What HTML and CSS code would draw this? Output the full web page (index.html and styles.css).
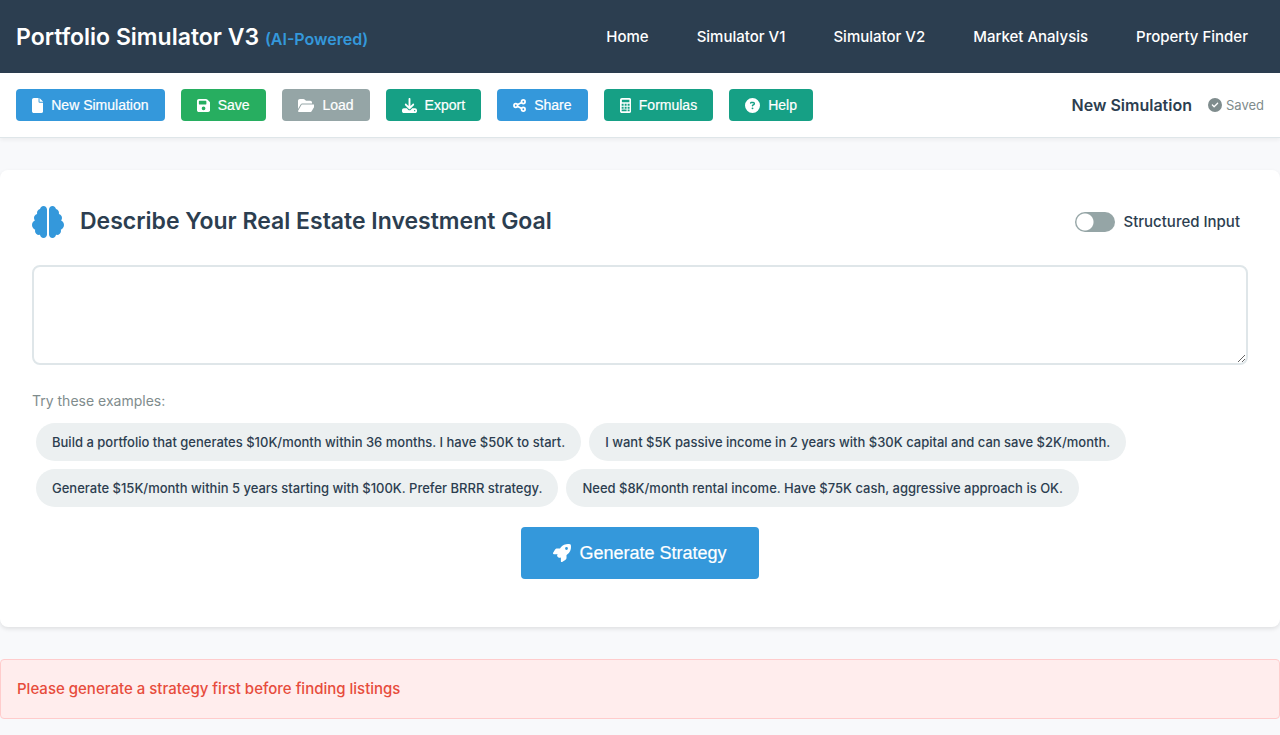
FILE: index.html
```html
<!DOCTYPE html>
<html lang="en">
<head>
<meta charset="utf-8">
<meta name="viewport" content="width=device-width, initial-scale=1">
<title>Portfolio Simulator V3</title>
<link rel="stylesheet" href="styles.css">
</head>
<body>
<header class="header">
  <h1 class="brand">Portfolio Simulator V3 <span class="brand-tag">(AI-Powered)</span></h1>
  <nav class="nav">
    <a href="#">Home</a>
    <a href="#">Simulator V1</a>
    <a href="#">Simulator V2</a>
    <a href="#">Market Analysis</a>
    <a href="#">Property Finder</a>
  </nav>
</header>

<div class="toolbar">
  <div class="actions">
    <button type="button" class="btn btn-blue"><svg class="icon" viewBox="0 0 384 512" aria-hidden="true"><path d="M0 64C0 28.7 28.7 0 64 0H224V128c0 17.7 14.3 32 32 32H384V448c0 35.3-28.7 64-64 64H64c-35.3 0-64-28.7-64-64V64zm384 64H256V0L384 128z"/></svg>New Simulation</button>
    <button type="button" class="btn btn-green"><svg class="icon" viewBox="0 0 448 512" aria-hidden="true"><path fill-rule="evenodd" d="M64 32C28.7 32 0 60.7 0 96V416c0 35.3 28.7 64 64 64H384c35.3 0 64-28.7 64-64V173.3c0-17-6.7-33.3-18.7-45.3L352 50.7C340 38.7 323.7 32 306.7 32H64zm0 96c0-17.7 14.3-32 32-32H288c17.7 0 32 14.3 32 32v64c0 17.7-14.3 32-32 32H96c-17.7 0-32-14.3-32-32V128zM224 288a64 64 0 1 1 0 128 64 64 0 1 1 0-128z"/></svg>Save</button>
    <button type="button" class="btn btn-gray"><svg class="icon" viewBox="0 0 576 512" aria-hidden="true"><path d="M88.7 223.8L0 375.8V96C0 60.7 28.7 32 64 32H181.5c17 0 33.3 6.7 45.3 18.7l26.5 26.5c12 12 28.3 18.7 45.3 18.7H416c35.3 0 64 28.7 64 64v32H144c-22.8 0-43.8 12.1-55.3 31.8zm27.6 16.1C122.1 230 132.6 224 144 224H544c11.5 0 22 6.1 27.7 16.1s5.7 22.2-.1 32.1l-112 192C453.9 474 443.4 480 432 480H32c-11.5 0-22-6.1-27.7-16.1s-5.7-22.2 .1-32.1l112-192z"/></svg>Load</button>
    <button type="button" class="btn btn-teal"><svg class="icon" viewBox="0 0 512 512" aria-hidden="true"><path fill-rule="evenodd" d="M288 32c0-17.7-14.3-32-32-32s-32 14.3-32 32V274.7l-73.4-73.4c-12.5-12.5-32.8-12.5-45.3 0s-12.5 32.8 0 45.3l128 128c12.5 12.5 32.8 12.5 45.3 0l128-128c12.5-12.5 12.5-32.8 0-45.3s-32.8-12.5-45.3 0L288 274.7V32zM64 352c-35.3 0-64 28.7-64 64v32c0 35.3 28.7 64 64 64H448c35.3 0 64-28.7 64-64V416c0-35.3-28.7-64-64-64H346.5l-45.3 45.3c-25 25-65.5 25-90.5 0L165.5 352H64zm368 56a24 24 0 1 1 0 48 24 24 0 1 1 0-48z"/></svg>Export</button>
    <button type="button" class="btn btn-blue"><svg class="icon" viewBox="0 0 448 512" aria-hidden="true"><g fill="none" stroke="currentColor" stroke-width="60"><circle cx="352" cy="128" r="60"/><circle cx="94" cy="256" r="60"/><circle cx="352" cy="384" r="60"/><path d="M148 230l150-76M148 282l150 76"/></g></svg>Share</button>
    <button type="button" class="btn btn-teal"><svg class="icon" viewBox="0 0 384 512" aria-hidden="true"><path fill-rule="evenodd" d="M64 0C28.7 0 0 28.7 0 64V448c0 35.3 28.7 64 64 64H320c35.3 0 64-28.7 64-64V64c0-35.3-28.7-64-64-64H64zM64 60H320V144H64zM56 196h68v68H56zM158 196h68v68h-68zM260 196h68v68h-68zM56 296h68v68H56zM158 296h68v68h-68zM260 296h68v68h-68zM56 396h170v60H56zM260 396h68v60h-68z"/></svg>Formulas</button>
    <button type="button" class="btn btn-teal"><svg class="icon" viewBox="0 0 512 512" aria-hidden="true"><path fill-rule="evenodd" d="M256 512A256 256 0 1 0 256 0a256 256 0 1 0 0 512zM169.8 165.3c7.9-22.3 29.1-37.3 52.8-37.3h58.3c34.9 0 63.1 28.3 63.1 63.1c0 22.6-12.1 43.5-31.7 54.8L280 264.4c-.2 13-10.9 23.6-24 23.6c-13.3 0-24-10.7-24-24V250.5c0-8.6 4.6-16.5 12.1-20.8l44.3-25.4c4.7-2.7 7.6-7.7 7.6-13.1c0-8.4-6.8-15.1-15.1-15.1H222.6c-3.4 0-6.4 2.1-7.5 5.3l-.4 1.2c-4.4 12.5-18.2 19-30.6 14.6s-19-18.2-14.6-30.6l.4-1.2zM224 352a32 32 0 1 1 64 0 32 32 0 1 1-64 0z"/></svg>Help</button>
  </div>
  <div class="status">
    <span class="sim-name">New Simulation</span>
    <span class="saved"><svg class="icon" viewBox="0 0 512 512" aria-hidden="true"><path fill-rule="evenodd" d="M256 512A256 256 0 1 0 256 0a256 256 0 1 0 0 512zM369 209L241 337c-9.4 9.4-24.6 9.4-33.9 0l-64-64c-9.4-9.4-9.4-24.6 0-33.9s24.6-9.4 33.9 0l47 47L335 175c9.4-9.4 24.6-9.4 33.9 0s9.4 24.6 0 33.9z"/></svg>Saved</span>
  </div>
</div>

<main class="main">
  <section class="card">
    <div class="card-head">
      <svg class="icon icon-brain" viewBox="0 0 512 512" aria-hidden="true"><path d="M184 0c30.9 0 56 25.1 56 56V456c0 30.9-25.1 56-56 56c-28.9 0-52.7-21.9-55.7-50.1c-5.2 1.4-10.7 2.1-16.3 2.1c-35.3 0-64-28.7-64-64c0-7.4 1.3-14.6 3.6-21.2C21.4 367.4 0 338.2 0 304c0-31.9 18.7-59.5 45.8-72.3C37.1 220.8 32 207 32 192c0-30.7 21.6-56.3 50.4-62.6C80.8 123.9 80 118 80 112c0-29.9 20.6-55.1 48.3-62.1C131.3 21.9 155.1 0 184 0zM328 0c28.9 0 52.6 21.9 55.7 49.9c27.8 7 48.3 32.1 48.3 62.1c0 6-.8 11.9-2.4 17.4c28.8 6.2 50.4 31.9 50.4 62.6c0 15-5.1 28.8-13.8 39.7C493.3 244.5 512 272.1 512 304c0 34.2-21.4 63.4-51.6 74.8c2.3 6.6 3.6 13.8 3.6 21.2c0 35.3-28.7 64-64 64c-5.6 0-11.1-.7-16.3-2.1c-3 28.2-26.8 50.1-55.7 50.1c-30.9 0-56-25.1-56-56V56c0-30.9 25.1-56 56-56z"/></svg>
      <h2 class="card-title" id="goal-title">Describe Your Real Estate Investment Goal</h2>
      <label class="toggle"><input type="checkbox" class="switch">Structured Input</label>
    </div>
    <textarea class="goal" aria-labelledby="goal-title"></textarea>
    <p class="hint">Try these examples:</p>
    <div class="examples">
      <button type="button" class="chip">Build a portfolio that generates $10K/month within 36 months. I have $50K to start.</button>
      <button type="button" class="chip">I want $5K passive income in 2 years with $30K capital and can save $2K/month.</button>
      <button type="button" class="chip">Generate $15K/month within 5 years starting with $100K. Prefer BRRR strategy.</button>
      <button type="button" class="chip">Need $8K/month rental income. Have $75K cash, aggressive approach is OK.</button>
    </div>
    <div class="submit">
      <button type="submit" class="btn btn-blue btn-large"><svg class="icon" viewBox="0 0 512 512" aria-hidden="true"><path fill-rule="evenodd" d="M156.6 384.9L125.7 354c-8.5-8.5-11.5-20.8-7.7-32.2c3-8.9 7-20.5 11.8-33.8L24 288c-8.6 0-16.6-4.6-20.9-12.1s-4.2-16.7 .2-24.1l52.5-88.5c13-21.9 36.5-35.3 61.9-35.3l82.3 0c2.4-4 4.8-7.7 7.2-11.3C289.1-4.1 411.1-8.1 483.9 5.3c11.6 2.1 20.6 11.2 22.8 22.8c13.4 72.9 9.3 194.8-111.4 276.7c-3.5 2.4-7.3 4.8-11.3 7.2v82.3c0 25.4-13.4 49-35.3 61.9l-88.5 52.5c-7.4 4.4-16.6 4.5-24.1 .2s-12.1-12.2-12.1-20.9V380.8c-14.1 4.9-26.4 8.9-35.7 11.9c-11.2 3.6-23.4 .5-31.8-7.8zM384 168a40 40 0 1 0 0-80 40 40 0 1 0 0 80z"/></svg>Generate Strategy</button>
    </div>
  </section>
  <div class="alert" role="alert">Please generate a strategy first before finding listings</div>
</main>
</body>
</html>
```
FILE: styles.css
```css
* { box-sizing: border-box; }

body {
  margin: 0;
  background: #f8f9fb;
  color: #2c3e50;
  font: 500 15px/24px Inter, sans-serif;
}

.icon {
  height: 15px;
  fill: currentColor;
  flex: none;
}

.header {
  display: flex;
  align-items: center;
  justify-content: space-between;
  padding: 17px 16px 16px;
  background: #2c3e50;
  color: #fff;
}

.brand {
  margin: 0;
  font-size: 23px;
  font-weight: 600;
  line-height: 40px;
}

.brand-tag {
  color: #3498db;
  font-size: 16px;
  line-height: 24px;
}

.nav {
  display: flex;
  gap: 16px;
}

.nav a {
  padding: 8px 16px;
  color: #fff;
  text-decoration: none;
}

.toolbar {
  display: flex;
  align-items: center;
  justify-content: space-between;
  padding: 16px;
  background: #fff;
  border-bottom: 1px solid #dfe6e9;
  box-shadow: 0 2px 4px rgba(0, 0, 0, 0.05);
}

.actions {
  display: flex;
  gap: 16px;
}

.btn {
  display: inline-flex;
  align-items: center;
  justify-content: center;
  gap: 8px;
  padding: 8px 16px;
  border: 0;
  border-radius: 4px;
  color: #fff;
  font: 400 14px/16px "Liberation Sans", Arial, sans-serif;
  -webkit-text-stroke: 0.2px currentColor;
}

.btn-blue { background: #3498db; }
.btn-green { background: #27ae60; }
.btn-gray { background: #95a5a6; }
.btn-teal { background: #16a085; }

.btn-large {
  padding: 16px 32px;
  font-size: 18px;
  line-height: 20px;
}

.btn-large .icon {
  height: 18px;
}

.status {
  display: flex;
  align-items: center;
  gap: 16px;
}

.sim-name {
  font-size: 16px;
  font-weight: 600;
}

.saved {
  display: flex;
  align-items: center;
  gap: 4px;
  color: #7f8c8d;
  font-size: 13px;
  font-weight: 400;
}

.saved .icon {
  height: 14px;
}

.main {
  padding: 32px 0 16px;
}

.card {
  padding: 32px 32px 48px;
  background: #fff;
  border-radius: 8px;
  box-shadow: 0 2px 4px rgba(0, 0, 0, 0.1);
}

.card-head {
  display: flex;
  align-items: center;
  gap: 16px;
  margin-bottom: 24px;
}

.icon-brain {
  height: 32px;
  color: #3498db;
}

.card-title {
  flex: 1;
  margin: 0;
  font-size: 23px;
  font-weight: 600;
  line-height: 39px;
}

.toggle {
  display: flex;
  align-items: center;
  gap: 8px;
  padding: 0 8px;
}

.switch {
  appearance: none;
  width: 40px;
  height: 20px;
  margin: 0;
  border-radius: 10px;
  background: radial-gradient(circle at 10px 10px, #fff 8px, transparent 9px) #95a5a6;
}

.switch:checked {
  background: radial-gradient(circle at 30px 10px, #fff 8px, transparent 9px) #3498db;
}

.goal {
  display: block;
  width: 100%;
  height: 100px;
  padding: 16px;
  border: 2px solid #dfe6e9;
  border-radius: 8px;
  font: inherit;
  resize: vertical;
}

.hint {
  margin: 24px 0 10px;
  color: #7f8c8d;
  font-size: 14px;
  font-weight: 400;
}

.examples {
  display: flex;
  flex-wrap: wrap;
  gap: 8px;
  padding: 0 4px;
}

.chip {
  padding: 8px 16px;
  border: 0;
  border-radius: 20px;
  background: #ecf0f1;
  color: #2c3e50;
  font: 500 13px/22px Inter, sans-serif;
}

.submit {
  display: flex;
  justify-content: center;
  margin-top: 20px;
}

.alert {
  margin-top: 32px;
  padding: 17px 16px;
  border: 1px solid #ffcccc;
  border-radius: 4px;
  background: #ffeded;
  color: #e74c3c;
}
```
